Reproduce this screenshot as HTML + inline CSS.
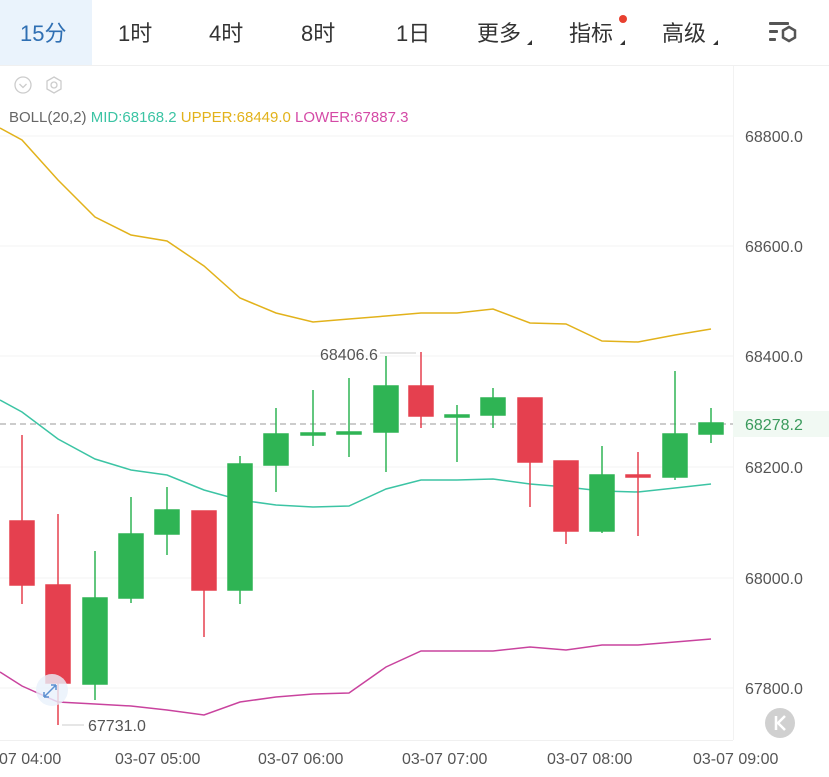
<!DOCTYPE html>
<html><head><meta charset="utf-8"><style>
body{margin:0;width:829px;height:772px;overflow:hidden;background:#fff;font-family:"Liberation Sans","Noto Sans CJK SC",sans-serif;}
svg text{font-family:"Liberation Sans","Noto Sans CJK SC",sans-serif;}
</style></head><body>
<svg width="829" height="772" viewBox="0 0 829 772" xmlns="http://www.w3.org/2000/svg">
<rect x="0" y="0" width="92" height="65" fill="#eaf3fc"/>
<line x1="0" y1="65.5" x2="829" y2="65.5" stroke="#f0f0f0"/>
<g font-size="22" fill="#333">
<text x="20" y="41" fill="#2f6fb3">15分</text>
<text x="118" y="41">1时</text>
<text x="209" y="41">4时</text>
<text x="301" y="41">8时</text>
<text x="396" y="41">1日</text>
<text x="477" y="41">更多</text>
<text x="569" y="41">指标</text>
<text x="662" y="41">高级</text>
</g>
<g fill="#333"><path d="M527 45 l5 -5 v5z"/><path d="M620 45 l5 -5 v5z"/><path d="M713 45 l5 -5 v5z"/></g>
<circle cx="623" cy="19" r="4" fill="#e8402f"/>
<g fill="#555"><rect x="769" y="22" width="20" height="3" rx="1"/><rect x="769" y="30" width="9" height="3" rx="1"/><rect x="769" y="38" width="7" height="3" rx="1"/>
<path d="M789 27 l6 3.5 v7 l-6 3.5 l-6 -3.5 v-7z" fill="none" stroke="#555" stroke-width="2.5"/></g>
<line x1="733.5" y1="66" x2="733.5" y2="740" stroke="#f2f2f2"/>
<g stroke="#ccc" fill="none" stroke-width="1.3"><circle cx="23" cy="85" r="8"/><path d="M19.5 84 l3.5 3.5 l3.5 -3.5"/><path d="M54 77 l7 4 v8 l-7 4 l-7 -4 v-8z"/><circle cx="54" cy="85" r="3"/></g>
<text x="9" y="122" font-size="15"><tspan fill="#666">BOLL(20,2) </tspan><tspan fill="#3cc4a4">MID:68168.2 </tspan><tspan fill="#e2b21b">UPPER:68449.0 </tspan><tspan fill="#d44aa6">LOWER:67887.3</tspan></text>
<g stroke="#f3f3f3"><line x1="0" y1="136" x2="733" y2="136"/><line x1="0" y1="246" x2="733" y2="246"/><line x1="0" y1="356" x2="733" y2="356"/><line x1="0" y1="467" x2="733" y2="467"/><line x1="0" y1="578" x2="733" y2="578"/><line x1="0" y1="688" x2="733" y2="688"/></g>
<g font-size="16" fill="#555"><text x="745" y="142">68800.0</text><text x="745" y="252">68600.0</text><text x="745" y="362">68400.0</text><text x="745" y="473">68200.0</text><text x="745" y="584">68000.0</text><text x="745" y="694">67800.0</text></g>
<rect x="733" y="411" width="96" height="26" fill="#f1f9f3"/>
<text x="745" y="430" font-size="16" fill="#3a9a5c">68278.2</text>
<line x1="0" y1="424" x2="733" y2="424" stroke="#999" stroke-dasharray="6,4"/>
<polyline fill="none" stroke="#e2b21b" stroke-width="1.5" points="0,128 22,140 58,180 95,217 131,235 167,241 204,266 240,298 276,313 313,322 349,319 386,316 421,313 457,313 493,309 530,323 566,324 602,341 638,342 675,335 711,329"/>
<polyline fill="none" stroke="#3cc4a4" stroke-width="1.5" points="0,400 22,412 58,439 95,459 131,470 167,475 204,490 240,500 276,505 313,507 349,506 386,489 421,480 457,480 493,479 530,484 566,487 602,491 638,492 675,488 711,484"/>
<polyline fill="none" stroke="#c9439e" stroke-width="1.5" points="0,672 22,686 58,702 95,704 131,706 167,710 204,715 240,702 276,697 313,694 349,693 386,667 421,651 457,651 493,651 530,647 566,650 602,645 638,645 675,642 711,639"/>
<g stroke-width="1.5">
<g stroke="#e5404f" fill="#e5404f">
<line x1="22" y1="435" x2="22" y2="604"/><rect x="10" y="521" width="24" height="64"/>
<line x1="58" y1="514" x2="58" y2="725"/><rect x="46" y="585" width="24" height="98"/>
<line x1="204" y1="511" x2="204" y2="637"/><rect x="192" y="511" width="24" height="79"/>
<line x1="421" y1="352" x2="421" y2="428"/><rect x="409" y="386" width="24" height="30"/>
<line x1="530" y1="398" x2="530" y2="507"/><rect x="518" y="398" width="24" height="64"/>
<line x1="566" y1="461" x2="566" y2="544"/><rect x="554" y="461" width="24" height="70"/>
<line x1="638" y1="452" x2="638" y2="536"/><rect x="626" y="475" width="24" height="2"/>
</g>
<g stroke="#2fb454" fill="#2fb454">
<line x1="95" y1="551" x2="95" y2="700"/><rect x="83" y="598" width="24" height="86"/>
<line x1="131" y1="497" x2="131" y2="603"/><rect x="119" y="534" width="24" height="64"/>
<line x1="167" y1="487" x2="167" y2="555"/><rect x="155" y="510" width="24" height="24"/>
<line x1="240" y1="456" x2="240" y2="604"/><rect x="228" y="464" width="24" height="126"/>
<line x1="276" y1="408" x2="276" y2="492"/><rect x="264" y="434" width="24" height="31"/>
<line x1="313" y1="390" x2="313" y2="446"/><rect x="301" y="433" width="24" height="2"/>
<line x1="349" y1="378" x2="349" y2="457"/><rect x="337" y="432" width="24" height="2"/>
<line x1="386" y1="356" x2="386" y2="472"/><rect x="374" y="386" width="24" height="46"/>
<line x1="457" y1="405" x2="457" y2="462"/><rect x="445" y="415" width="24" height="2"/>
<line x1="493" y1="388" x2="493" y2="428"/><rect x="481" y="398" width="24" height="17"/>
<line x1="602" y1="446" x2="602" y2="533"/><rect x="590" y="475" width="24" height="56"/>
<line x1="675" y1="371" x2="675" y2="480"/><rect x="663" y="434" width="24" height="43"/>
<line x1="711" y1="408" x2="711" y2="443"/><rect x="699" y="423" width="24" height="11"/>
</g></g>
<line x1="380" y1="353" x2="416" y2="353" stroke="#ccc"/>
<text x="320" y="360" font-size="16" fill="#555">68406.6</text>
<line x1="62" y1="725" x2="84" y2="725" stroke="#ccc"/>
<text x="88" y="731" font-size="16" fill="#555">67731.0</text>
<circle cx="52" cy="690" r="16" fill="#e8f1fb" opacity="0.8"/>
<path d="M44 697 l12 -12 M44 697 v-5 M44 697 h5 M56 685 h-5 M56 685 v5" stroke="#5b8fd0" stroke-width="1.5" fill="none"/>
<circle cx="780" cy="723" r="15" fill="#d0d0d0"/>
<path d="M776 716 v14 M785 716 l-7 7 l7 7" stroke="#fff" stroke-width="2.5" fill="none"/>
<line x1="0" y1="740.5" x2="733" y2="740.5" stroke="#f0f0f0"/>
<g font-size="16" fill="#555"><text x="-1" y="764">07 04:00</text><text x="115" y="764">03-07 05:00</text><text x="258" y="764">03-07 06:00</text><text x="402" y="764">03-07 07:00</text><text x="547" y="764">03-07 08:00</text><text x="693" y="764">03-07 09:00</text></g>
</svg>
</body></html>
